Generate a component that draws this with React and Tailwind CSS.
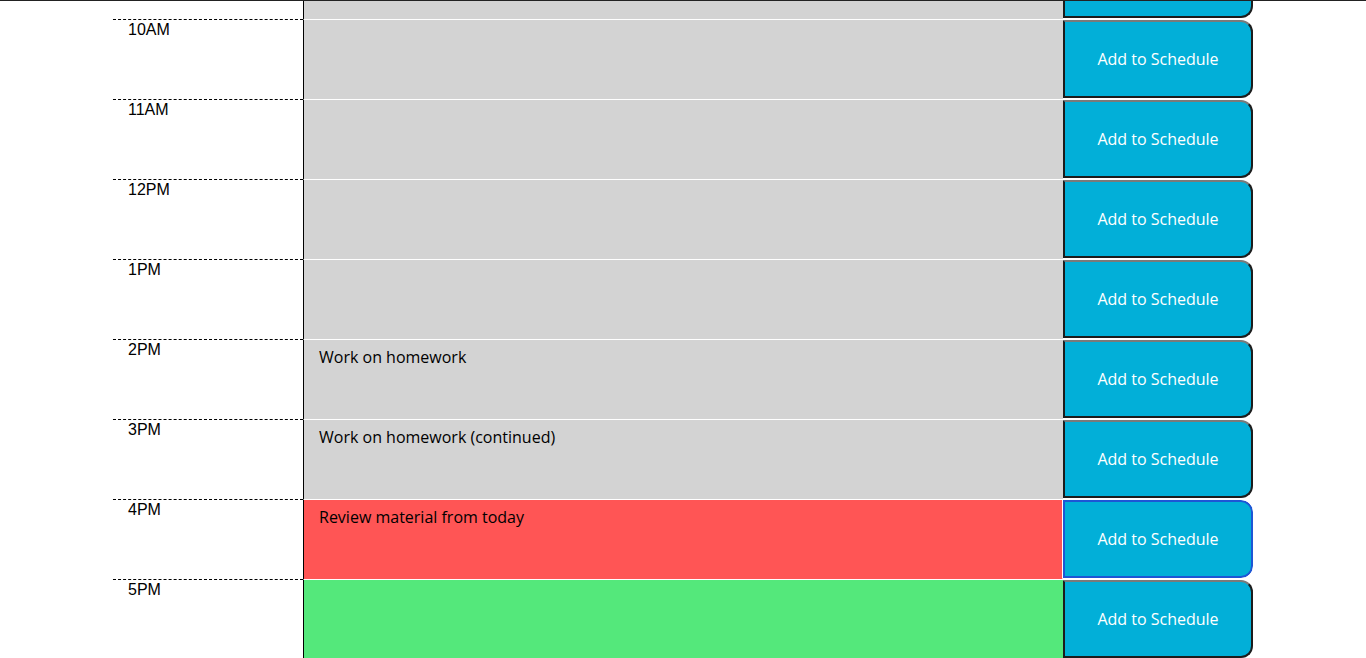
import React from "react";

const rows = [
  { hour: "9AM", text: "", bg: "bg-[#d3d3d3]" },
  { hour: "10AM", text: "", bg: "bg-[#d3d3d3]" },
  { hour: "11AM", text: "", bg: "bg-[#d3d3d3]" },
  { hour: "12PM", text: "", bg: "bg-[#d3d3d3]" },
  { hour: "1PM", text: "", bg: "bg-[#d3d3d3]" },
  { hour: "2PM", text: "Work on homework", bg: "bg-[#d3d3d3]" },
  { hour: "3PM", text: "Work on homework (continued)", bg: "bg-[#d3d3d3]" },
  { hour: "4PM", text: "Review material from today", bg: "bg-[#ff5555]", focused: true },
  { hour: "5PM", text: "", bg: "bg-[#54e87b]" },
];

const btnNormal =
  "border-l-2 border-t-2 border-r-2 border-b-2 border-l-[#1c1c1c] border-t-[#7a7a7a] border-r-[#1c1c1c] border-b-[#1c1c1c]";
const btnFocused = "border-2 border-[#1d56d5] outline outline-1 outline-white";

function Row({ hour, text, bg, focused }) {
  return (
    <div className="flex h-20 shrink-0">
      <div className="w-[190px] shrink-0 border-t border-dashed border-black pl-[15px] pt-[1px] font-['Liberation_Sans',Arial,sans-serif] text-base leading-[18px] text-black">
        {hour}
      </div>
      <textarea
        className={
          "w-[760px] shrink-0 resize-none border-l border-t border-l-black border-t-white pl-[15px] pt-[5px] font-['Open_Sans',sans-serif] text-base text-black outline-none " +
          bg
        }
        defaultValue={text}
      />
      <button
        className={
          "my-px w-[190px] shrink-0 rounded-r-[12px] bg-[#02afd8] font-['Open_Sans',sans-serif] text-base text-white " +
          (focused ? btnFocused : btnNormal)
        }
      >
        Add to Schedule
      </button>
    </div>
  );
}

export default function App() {
  const [first, ...rest] = rows;
  return (
    <div className="h-[658px] w-full overflow-hidden bg-white">
      <div className="h-px w-full bg-[#222]" />
      <div className="mx-auto w-[1140px]">
        <div className="flex h-[18px] flex-col justify-end overflow-hidden">
          <Row {...first} />
        </div>
        {rest.map((r) => (
          <Row key={r.hour} {...r} />
        ))}
      </div>
    </div>
  );
}
